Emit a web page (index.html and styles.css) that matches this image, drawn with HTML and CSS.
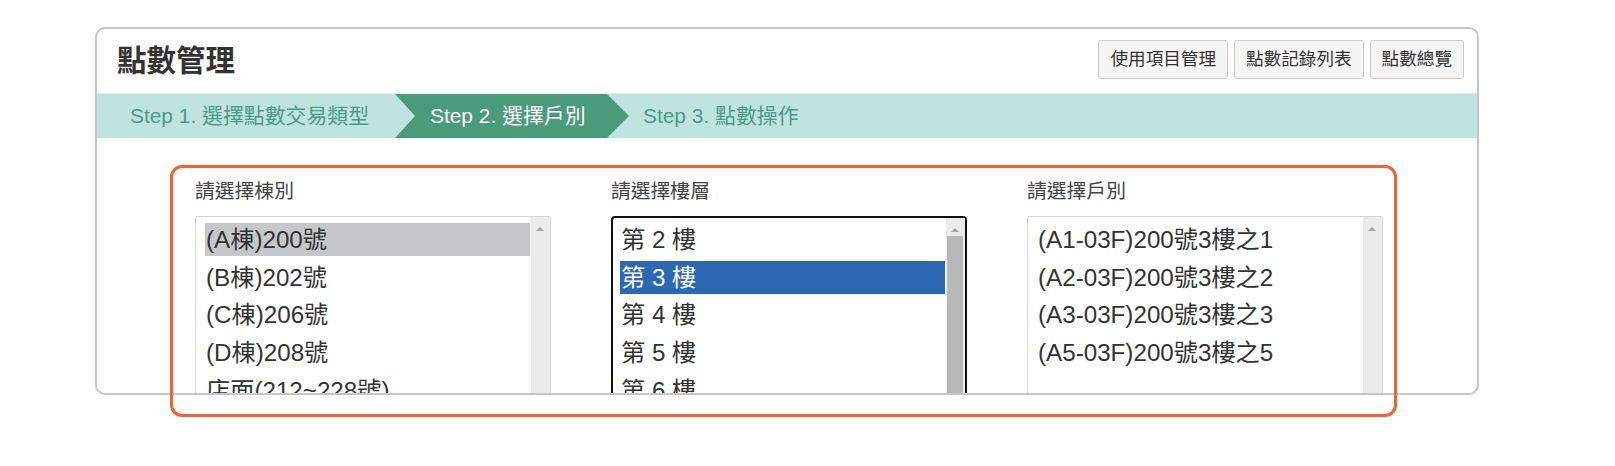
FILE: index.html
```html
<!DOCTYPE html>
<html lang="zh-Hant">
<head>
<meta charset="utf-8">
<title>點數管理</title>
<link rel="stylesheet" href="styles.css">
</head>
<body>
<div class="page">
  <div class="panel">
    <div class="panel-head">
      <h1 class="title">點數管理</h1>
      <div class="actions">
        <button class="btn">使用項目管理</button>
        <button class="btn">點數記錄列表</button>
        <button class="btn">點數總覽</button>
      </div>
    </div>
    <div class="steps">
      <div class="step step-first">Step 1. 選擇點數交易類型</div>
      <div class="step step-active">Step 2. 選擇戶別</div>
      <div class="step step-last">Step 3. 點數操作</div>
    </div>
    <div class="panel-body">
      <div class="field">
        <div class="label">請選擇棟別</div>
        <div class="listbox">
          <ul class="options">
            <li class="opt opt-inactive">(A棟)200號</li>
            <li class="opt">(B棟)202號</li>
            <li class="opt">(C棟)206號</li>
            <li class="opt">(D棟)208號</li>
            <li class="opt">店面(212~228號)</li>
          </ul>
          <div class="scroll"><span class="arrow"></span></div>
        </div>
      </div>
      <div class="field">
        <div class="label">請選擇樓層</div>
        <div class="listbox listbox-focus">
          <ul class="options">
            <li class="opt">第 2 樓</li>
            <li class="opt opt-selected">第 3 樓</li>
            <li class="opt">第 4 樓</li>
            <li class="opt">第 5 樓</li>
            <li class="opt">第 6 樓</li>
            <li class="opt">第 7 樓</li>
          </ul>
          <div class="scroll"><span class="arrow"></span><span class="thumb"></span></div>
        </div>
      </div>
      <div class="field">
        <div class="label">請選擇戶別</div>
        <div class="listbox">
          <ul class="options">
            <li class="opt">(A1-03F)200號3樓之1</li>
            <li class="opt">(A2-03F)200號3樓之2</li>
            <li class="opt">(A3-03F)200號3樓之3</li>
            <li class="opt">(A5-03F)200號3樓之5</li>
          </ul>
          <div class="scroll"><span class="arrow"></span></div>
        </div>
      </div>
    </div>
  </div>
  <div class="annot"></div>
</div>
</body>
</html>
```

FILE: styles.css
```css
* { box-sizing: border-box; }
html, body { margin: 0; padding: 0; background: #ffffff; }
body {
  font-family: "Liberation Sans", "Noto Sans CJK TC", sans-serif;
  color: #333;
}
.page {
  position: relative;
  width: 1615px;
  height: 466px;
  padding: 27px 0 0 95px;
}
.panel {
  width: 1384px;
  height: 368px;
  border: 2px solid #c6c6c6;
  border-radius: 10px;
  background: #fefefe;
  overflow: hidden;
}
.panel-head {
  height: 65px;
  display: flex;
  align-items: center;
  justify-content: space-between;
  padding: 0 13px 4px 20px;
  border-bottom: 1px solid #ececec;
}
.title {
  margin: 0;
  font-size: 29.5px;
  font-weight: bold;
  color: #333;
  line-height: 34px;
  padding-top: 4px;
}
.actions { display: flex; gap: 6px; }
.btn {
  height: 39px;
  padding: 0 11px;
  border: 1px solid #cacaca;
  border-radius: 3px;
  background: #f5f5f5;
  font-family: "Liberation Sans", "Noto Sans CJK TC", sans-serif;
  font-size: 17.6px;
  color: #333;
  line-height: 37px;
}
.steps {
  height: 44px;
  display: flex;
  background: #bfe4df;
}
.step {
  height: 44px;
  line-height: 44px;
  font-size: 20.9px;
  color: #4b9a89;
  white-space: nowrap;
}
.step-first { width: 298px; padding-left: 33px; }
.step-active {
  width: 234px;
  padding-left: 35px;
  color: #ffffff;
  background: #4a9a7c;
  clip-path: polygon(0 0, calc(100% - 22px) 0, 100% 50%, calc(100% - 22px) 100%, 0 100%, 20px 50%);
}
.step-last { padding-left: 14px; }
.panel-body {
  display: grid;
  grid-template-columns: 356px 356px 356px;
  column-gap: 60px;
  padding: 39px 0 0 98px;
}
.label {
  font-size: 19.8px;
  line-height: 28px;
  color: #444;
  margin-bottom: 11px;
}
.listbox {
  display: flex;
  height: 240px;
  border: 1px solid #d6d6d6;
  border-radius: 2px;
  background: #fff;
}
.listbox-focus {
  border: 2px solid #111;
  border-radius: 4px;
  margin-top: 1px;
}
.options {
  flex: 1;
  list-style: none;
  margin: 0;
  padding: 6px 1px 0 9px;
}
.listbox-focus .options { padding: 5px 1px 0 7px; }
.opt {
  height: 33px;
  line-height: 33px;
  margin-bottom: 4.7px;
  padding-left: 1px;
  font-size: 24.2px;
  color: #333;
  white-space: nowrap;
}
.opt-inactive { background: #c6c7c8; }
.opt-selected { background: #2d69b2; color: #ffffff; }
.scroll {
  position: relative;
  width: 19px;
  background: #ebebeb;
}
.arrow {
  position: absolute;
  top: 10px;
  left: 5px;
  width: 0;
  height: 0;
  border-left: 4.5px solid transparent;
  border-right: 4.5px solid transparent;
  border-bottom: 4px solid #a3a3a3;
}
.thumb {
  position: absolute;
  top: 18px;
  left: 1px;
  right: 2px;
  bottom: 0;
  background: #b8b8b8;
}
.annot {
  position: absolute;
  left: 170px;
  top: 165px;
  width: 1227px;
  height: 252px;
  border: 3px solid #f4622f;
  border-radius: 12px;
}
```
